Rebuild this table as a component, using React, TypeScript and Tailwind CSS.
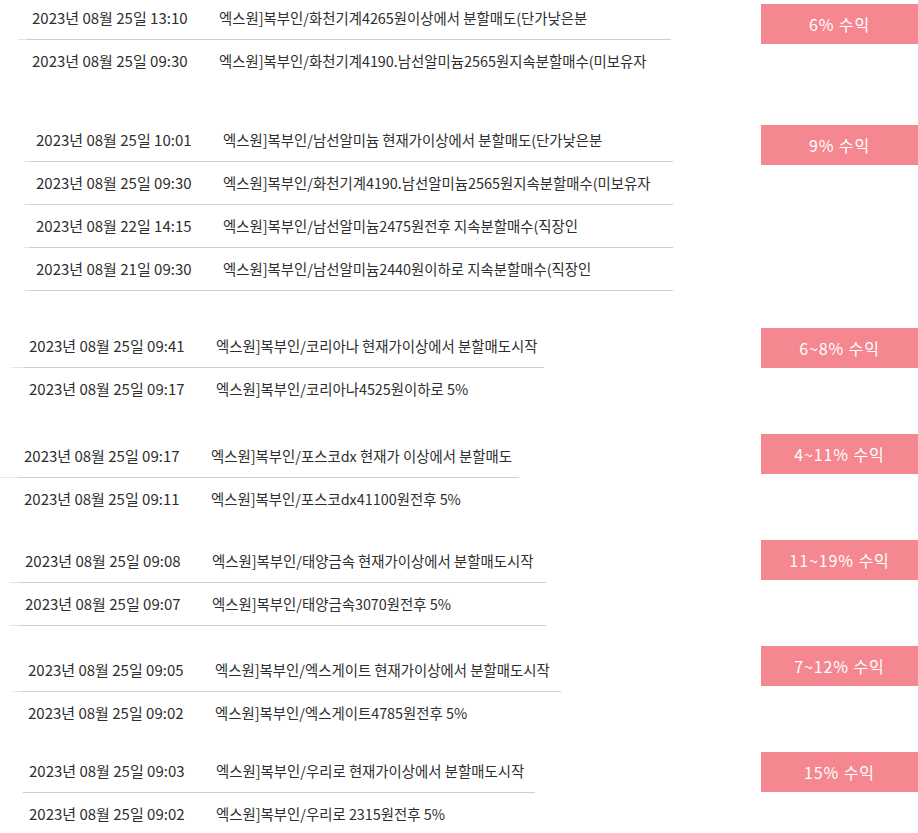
import React from "react";

type Row = { date: string; text: string; border: boolean };
type Section = {
  mt: string;
  ml: string;
  light: string;
  dark: string;
  badgeMt: string;
  badge: string;
  rows: Row[];
};

const sections: Section[] = [
  {
    mt: "mt-[-3px]",
    ml: "ml-[18px]",
    light: "w-[8px]",
    dark: "w-[645px]",
    badgeMt: "mt-[7px]",
    badge: "6% 수익",
    rows: [
      { date: "2023년 08월 25일 13:10", text: "엑스원]복부인/화천기계4265원이상에서 분할매도(단가낮은분", border: true },
      { date: "2023년 08월 25일 09:30", text: "엑스원]복부인/화천기계4190.남선알미늄2565원지속분할매수(미보유자", border: false },
    ],
  },
  {
    mt: "mt-[36px]",
    ml: "ml-[24px]",
    light: "w-[6px]",
    dark: "w-[643px]",
    badgeMt: "mt-[6px]",
    badge: "9% 수익",
    rows: [
      { date: "2023년 08월 25일 10:01", text: "엑스원]복부인/남선알미늄 현재가이상에서 분할매도(단가낮은분", border: true },
      { date: "2023년 08월 25일 09:30", text: "엑스원]복부인/화천기계4190.남선알미늄2565원지속분할매수(미보유자", border: true },
      { date: "2023년 08월 22일 14:15", text: "엑스원]복부인/남선알미늄2475원전후 지속분할매수(직장인", border: true },
      { date: "2023년 08월 21일 09:30", text: "엑스원]복부인/남선알미늄2440원이하로 지속분할매수(직장인", border: true },
    ],
  },
  {
    mt: "mt-[34px]",
    ml: "ml-[11px]",
    light: "w-[12px]",
    dark: "w-[521px]",
    badgeMt: "mt-[3px]",
    badge: "6~8% 수익",
    rows: [
      { date: "2023년 08월 25일 09:41", text: "엑스원]복부인/코리아나 현재가이상에서 분할매도시작", border: true },
      { date: "2023년 08월 25일 09:17", text: "엑스원]복부인/코리아나4525원이하로 5%", border: false },
    ],
  },
  {
    mt: "mt-[24px]",
    ml: "ml-[0px]",
    light: "w-[18px]",
    dark: "w-[501px]",
    badgeMt: "mt-[-1px]",
    badge: "4~11% 수익",
    rows: [
      { date: "2023년 08월 25일 09:17", text: "엑스원]복부인/포스코dx 현재가 이상에서 분할매도", border: true },
      { date: "2023년 08월 25일 09:11", text: "엑스원]복부인/포스코dx41100원전후 5%", border: false },
    ],
  },
  {
    mt: "mt-[19px]",
    ml: "ml-[10px]",
    light: "w-[9px]",
    dark: "w-[527px]",
    badgeMt: "mt-[0px]",
    badge: "11~19% 수익",
    rows: [
      { date: "2023년 08월 25일 09:08", text: "엑스원]복부인/태양금속 현재가이상에서 분할매도시작", border: true },
      { date: "2023년 08월 25일 09:07", text: "엑스원]복부인/태양금속3070원전후 5%", border: true },
    ],
  },
  {
    mt: "mt-[23px]",
    ml: "ml-[13px]",
    light: "w-[9px]",
    dark: "w-[539px]",
    badgeMt: "mt-[-3px]",
    badge: "7~12% 수익",
    rows: [
      { date: "2023년 08월 25일 09:05", text: "엑스원]복부인/엑스게이트 현재가이상에서 분할매도시작", border: true },
      { date: "2023년 08월 25일 09:02", text: "엑스원]복부인/엑스게이트4785원전후 5%", border: false },
    ],
  },
  {
    mt: "mt-[15px]",
    ml: "ml-[23px]",
    light: "w-[0px]",
    dark: "w-[512px]",
    badgeMt: "mt-[2px]",
    badge: "15% 수익",
    rows: [
      { date: "2023년 08월 25일 09:03", text: "엑스원]복부인/우리로 현재가이상에서 분할매도시작", border: true },
      { date: "2023년 08월 25일 09:02", text: "엑스원]복부인/우리로 2315원전후 5%", border: false },
    ],
  },
];

const font = { fontFamily: "'Noto Sans CJK KR', 'Noto Sans', sans-serif" };

function SectionBlock({ s }: { s: Section }) {
  return (
    <div className={`flex items-start justify-between ${s.mt}`}>
      <div className={`flex flex-col ${s.ml}`}>
        {s.rows.map((r, i) => (
          <div key={i} className="flex">
            <div
              className={`${s.light} h-[43px] border-b ${r.border ? "border-[#e6e6e6]" : "border-transparent"}`}
            />
            <div
              className={`${s.dark} h-[43px] border-b ${r.border ? "border-[#cfcfcf]" : "border-transparent"} flex items-center pl-[6px] whitespace-nowrap text-[#2e2e2e]`}
            >
              <span className="w-[187px] shrink-0 text-[15px] leading-[20px]">{r.date}</span>
              <span className="text-[14.4px] leading-[20px]">{r.text}</span>
            </div>
          </div>
        ))}
      </div>
      <div
        className={`${s.badgeMt} w-[157px] h-[40px] shrink-0 bg-[#f4878f] text-white text-[16px] tracking-[0.9px] flex items-center justify-center`}
      >
        {s.badge}
      </div>
    </div>
  );
}

export default function App() {
  return (
    <div className="w-[918px] h-[833px] overflow-hidden bg-white" style={font}>
      {sections.map((s, i) => (
        <SectionBlock key={i} s={s} />
      ))}
    </div>
  );
}
